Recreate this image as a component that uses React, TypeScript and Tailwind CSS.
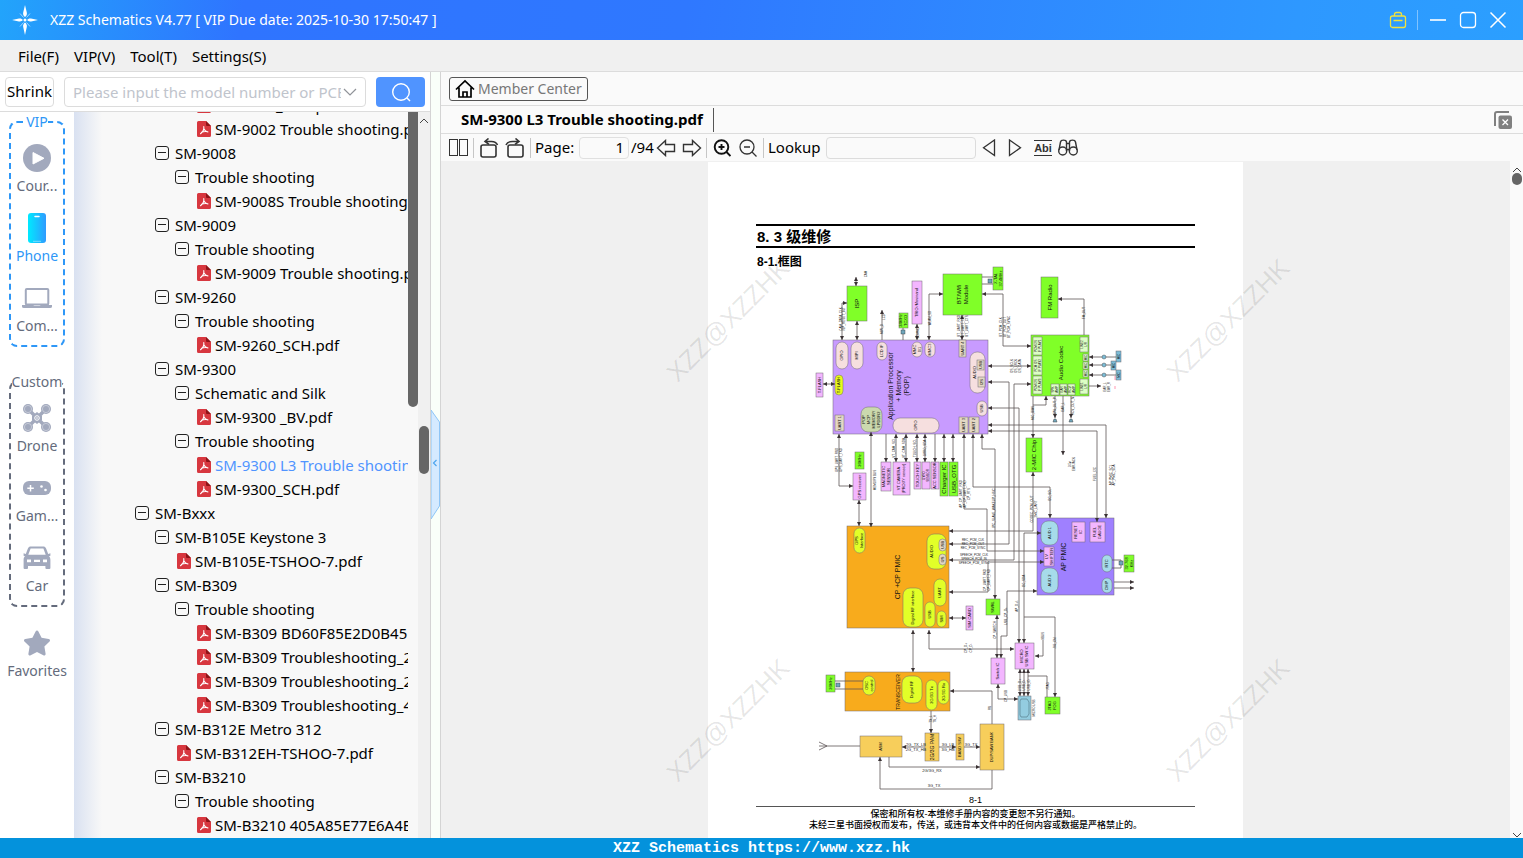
import type { ReactNode } from "react";
import { FaStar } from "react-icons/fa";

type TreeRow = {
  kind: "folder" | "file";
  depth: number;
  label: string;
  active?: boolean;
};

const folder = (depth: number, label: string): TreeRow => ({ kind: "folder", depth, label });
const file = (depth: number, label: string, active = false): TreeRow => ({
  kind: "file",
  depth,
  label,
  active,
});

const tree: TreeRow[] = [
  file(3, "SM-9002_SCH.pdf"),
  file(3, "SM-9002 Trouble shooting.pdf"),
  folder(1, "SM-9008"),
  folder(2, "Trouble shooting"),
  file(3, "SM-9008S Trouble shooting.pdf"),
  folder(1, "SM-9009"),
  folder(2, "Trouble shooting"),
  file(3, "SM-9009 Trouble shooting.pdf"),
  folder(1, "SM-9260"),
  folder(2, "Trouble shooting"),
  file(3, "SM-9260_SCH.pdf"),
  folder(1, "SM-9300"),
  folder(2, "Schematic and Silk"),
  file(3, "SM-9300 _BV.pdf"),
  folder(2, "Trouble shooting"),
  file(3, "SM-9300 L3 Trouble shooting.pdf", true),
  file(3, "SM-9300_SCH.pdf"),
  folder(0, "SM-Bxxx"),
  folder(1, "SM-B105E Keystone 3"),
  file(2, "SM-B105E-TSHOO-7.pdf"),
  folder(1, "SM-B309"),
  folder(2, "Trouble shooting"),
  file(3, "SM-B309 BD60F85E2D0B451"),
  file(3, "SM-B309 Troubleshooting_2"),
  file(3, "SM-B309 Troubleshooting_2"),
  file(3, "SM-B309 Troubleshooting_4"),
  folder(1, "SM-B312E Metro 312"),
  file(2, "SM-B312EH-TSHOO-7.pdf"),
  folder(1, "SM-B3210"),
  folder(2, "Trouble shooting"),
  file(3, "SM-B3210 405A85E77E6A4B"),
];

const indent = ["pl-[61px]", "pl-[81px]", "pl-[101px]", "pl-[121px]"];

function PdfIcon() {
  return (
    <svg viewBox="0 0 14 16" className="h-4 w-3.5">
      <path d="M1.500 0H9l5 5v9.500a1.500 1.500 0 0 1-1.500 1.500h-11A1.500 1.500 0 0 1 0 14.500v-13A1.500 1.500 0 0 1 1.500 0z" fill="#d7373f" />
      <path d="M9 0l5 5h-4a1 1 0 0 1-1-1z" fill="#8e1519" />
      <path d="M6.800 5.500c.4 3-1 5.500-3.300 7.200M7 8c.6 1.500 2 2.700 4 3M4.500 11.300c2-.9 4-1.100 6.300-.6" fill="none" stroke="#fff" strokeWidth="1.100" strokeLinecap="round" />
    </svg>
  );
}

function CollapseIcon() {
  return (
    <svg viewBox="0 0 14 14" className="h-3.5 w-3.5" fill="none" stroke="#222">
      <rect x="0.500" y="0.500" width="13" height="13" rx="2.500" />
      <path d="M3 6.500h8" />
    </svg>
  );
}

/* ---------- category column ---------- */

function CourseIcon() {
  return (
    <svg viewBox="0 0 28 28" className="h-7 w-7">
      <circle cx="14" cy="14" r="14" fill="#a2a9bd" />
      <path d="M10 8.500v11.500l11-5.700z" fill="#fff" stroke="#fff" strokeLinejoin="round" />
    </svg>
  );
}

function PhoneIcon() {
  return (
    <svg viewBox="0 0 18 30" className="h-[30px] w-[18px]">
      <defs>
        <linearGradient id="phone" x1="0" x2="1" y1="0" y2="0">
          <stop offset="0" stopColor="#00eaff" />
          <stop offset="1" stopColor="#2f9bff" />
        </linearGradient>
      </defs>
      <rect width="18" height="30" rx="3" fill="url(#phone)" />
      <path d="M7 3.500h4" stroke="#fff" strokeWidth="1.500" strokeLinecap="round" />
      <path d="M5 28.300h8" stroke="#8fe6ff" strokeWidth="0.800" />
    </svg>
  );
}

function LaptopIcon() {
  return (
    <svg viewBox="0 0 30 20" className="h-5 w-[30px]">
      <rect x="3.800" y="1" width="22.500" height="15.500" rx="1" fill="none" stroke="#a2a9bd" strokeWidth="2" />
      <path d="M0 17h11.500q0 1 1 1h5q1 0 1-1H30v1.500q0 1.500-2 1.500H2q-2 0-2-1.500z" fill="#a2a9bd" />
    </svg>
  );
}

function DroneIcon() {
  return (
    <svg viewBox="0 0 28 28" className="h-7 w-7">
      <path d="M5 5l18 18M23 5L5 23" stroke="#a2a9bd" strokeWidth="3.500" />
      {[5, 23].map((x) =>
        [5, 23].map((y) => (
          <g key={`${x}-${y}`}>
            <circle cx={x} cy={y} r="5" fill="#a2a9bd" />
            <circle cx={x} cy={y} r="3.600" fill="none" stroke="#e6e9ef" strokeWidth="0.500" />
          </g>
        ))
      )}
      <path d="M14 8l5 4v4l-5 4-5-4v-4z" fill="#a2a9bd" />
      <circle cx="14" cy="14" r="2.300" fill="none" stroke="#fff" strokeWidth="1" />
      <circle cx="14" cy="14" r="0.800" fill="#fff" />
    </svg>
  );
}

function GameIcon() {
  return (
    <svg viewBox="0 0 28 14" className="h-3.5 w-7">
      <rect width="28" height="14" rx="6" fill="#a2a9bd" />
      <path d="M7.500 4v6.500M4.300 7.200h6.500" stroke="#fff" strokeWidth="1.500" />
      <circle cx="18.500" cy="5.500" r="1.300" fill="#fff" />
      <circle cx="22.500" cy="9" r="1.300" fill="#fff" />
    </svg>
  );
}

function CarIcon() {
  return (
    <svg viewBox="0 0 28 24" className="h-6 w-7" fill="#a2a9bd">
      <path fillRule="evenodd" d="M8 0.500h12c1.600 0 2.600.6 3.200 2.200l2 5.300 2.200-.7v2.400l-1.400.6c1 1 1.400 2 1.400 3.500V22a1 1 0 0 1-1 1h-3a1 1 0 0 1-1-1v-2H5v2a1 1 0 0 1-1 1H1.600a1 1 0 0 1-1-1v-8.200c0-1.500.4-2.500 1.400-3.500l-1.400-.6V7.300l2.200.7 2-5.300C5.400 1.100 6.400.5 8 .5zM7.600 2.500L5.300 8.800h17.400l-2.300-6.300zM4 13.500v2.700h4v-2.700zM11 13.800v2.200h6v-2.200zM20 13.500v2.700h4v-2.700z" />
    </svg>
  );
}

function Category({ icon, label, active }: { icon: ReactNode; label: string; active?: boolean }) {
  return (
    <button type="button" className="flex w-full flex-col items-center gap-0.5">
      <span className="flex h-8 items-center justify-center">{icon}</span>
      <span className={`h-5 text-sm leading-5 ${active ? "text-[#2e97f7]" : "text-[#646b7c]"}`}>
        {label}
      </span>
    </button>
  );
}

/* ---------- block diagram ---------- */

type Block = [x: number, y: number, x2: number, y2: number, fill: string, label?: string, size?: number, pill?: boolean];

const GREEN = "#80ff28";
const PINK = "#f3b6ff";
const ROSE = "#f6dfdf";
const BEIGE = "#e3d8c4";
const LIME = "#e2ff28";
const SKY = "#a6dbea";
const LEAF = "#dcffc4";
const AMBER = "#f7ce5b";
const ORANGE = "#f8ab1c";

const blocks: Block[] = [
  [847, 286, 867, 321, GREEN, "ISP", 6],
  [912, 281, 922, 324, PINK, "TRIO /Movinand", 4],
  [943, 274, 982, 315, GREEN, "BT/Wifi|Module", 6],
  [899, 313, 908, 328, GREEN, "24MHz|TCXO", 4],
  [993, 267, 1003, 290, GREEN, "X-TAL|37.4MHz", 4],
  [1041, 277, 1058, 318, GREEN, "FM Radio", 6],
  [816, 373, 823, 397, PINK, "T-FLASH", 4],

  [833, 340, 988, 434, "#c89bff"],
  [836, 342, 848, 369, ROSE, "GPIO", 4, true],
  [851, 342, 863, 369, ROSE, "MIPI", 4, true],
  [877, 342, 887, 360, ROSE, "LCD IF", 4, true],
  [912, 342, 922, 357, ROSE, "MMC|0/1", 4, true],
  [925, 342, 935, 357, ROSE, "MMC3", 4, true],
  [959, 340, 966, 357, BEIGE, "UART 4", 4],
  [970, 352, 985, 393, ROSE, "AUDIO", 4, true],
  [977, 360, 984, 370, BEIGE, "USB", 4],
  [978, 377, 985, 387, BEIGE, "I2S", 4],
  [977, 401, 987, 416, ROSE, "USB", 4, true],
  [835, 375, 843, 395, "#e8fa1c", "T-FLASH", 4, true],
  [835, 415, 844, 431, BEIGE, "UART 1", 4],
  [861, 407, 882, 432, "#cbd9ae", "POP|MCP|MEMORY|LPDDR2", 4, true],
  [893, 418, 939, 433, ROSE, "GPIO", 4, true],
  [959, 417, 968, 433, BEIGE, "UART 3", 4],
  [969, 417, 979, 433, BEIGE, "UART 2", 4],

  [1031, 335, 1089, 396, GREEN],
  [1033, 337, 1042, 355, LEAF, "PCM I2S|IF PLAY1", 3],
  [1033, 356, 1042, 375, LEAF, "PCM I2S|IF PLAY2", 3],
  [1033, 376, 1042, 394, LEAF, "PCM I2S|IF PLAY3", 3],
  [1080, 337, 1088, 352, LEAF, "LINE2|L/R", 3],
  [1083, 354, 1088, 361, LEAF, "MIC", 3],
  [1083, 362, 1088, 369, LEAF, "MIC", 3],
  [1083, 370, 1088, 377, LEAF, "MIC", 3],
  [1080, 379, 1088, 394, LEAF, "LINE1|L/R", 3],
  [1051, 384, 1059, 395, LEAF, "SPK|AMP", 3],
  [1060, 384, 1067, 395, LEAF, "EAR|AMP", 3],
  [1068, 384, 1075, 395, LEAF, "RCV|AMP", 3],
  [1116, 351, 1121, 362, "#7cbcd6", "MIC", 3],
  [1111, 361, 1116, 370, "#7cbcd6", "MIC", 3],
  [1116, 370, 1121, 380, "#7cbcd6", "MIC", 3],
  [1026, 438, 1042, 472, GREEN, "2-MIC Chip", 6],

  [855, 452, 864, 469, GREEN, "26MHz", 4],
  [853, 473, 866, 500, PINK, "GPS reciever", 4],
  [881, 462, 891, 491, PINK, "MAGNETIC|SENSOR", 4],
  [893, 462, 910, 495, PINK, "VT CAMERA|(PROXY sensor)", 4],
  [914, 462, 921, 489, PINK, "TOUCH KEY", 4],
  [922, 462, 930, 489, PINK, "GYRO|SENSOR", 3],
  [931, 462, 939, 489, PINK, "ACC SENSOR", 4],
  [940, 462, 948, 496, GREEN, "Charger IC", 6],
  [949, 462, 958, 496, GREEN, "USB_OTG", 6],

  [847, 526, 949, 628, ORANGE],
  [854, 528, 865, 553, LIME, "GPS|Interface", 4, true],
  [927, 534, 946, 569, LIME, "AUDIO", 4, true],
  [939, 539, 946, 551, BEIGE, "USB", 4, true],
  [939, 554, 946, 565, BEIGE, "I2S", 4, true],
  [934, 579, 946, 606, LIME, "UART", 4, true],
  [903, 588, 923, 627, LIME, "Digital RF interface", 4, true],
  [925, 602, 935, 627, LIME, "USB", 4, true],
  [937, 611, 946, 627, LIME, "SIM", 4, true],
  [966, 606, 973, 630, PINK, "SIM CARD", 4],
  [986, 599, 1000, 615, GREEN, "SWRL", 4],

  [1037, 518, 1114, 595, "#9f80ff"],
  [1041, 521, 1058, 545, SKY, "AUD 1", 4, true],
  [1044, 547, 1054, 566, PINK, "LV|SHIFTER", 4],
  [1041, 568, 1058, 593, SKY, "AUD 2", 4, true],
  [1072, 522, 1085, 542, PINK, "RESET|IC", 4],
  [1090, 522, 1105, 542, PINK, "FUEL|GAUGE", 4],
  [1102, 555, 1112, 572, SKY, "RTC", 4, true],
  [1102, 578, 1112, 593, SKY, "CHIP", 4, true],
  [1124, 555, 1134, 572, GREEN, "32.768|KHz", 4],

  [1015, 643, 1034, 669, PINK, "MICRO|USB SW IC", 4],
  [991, 658, 1005, 684, PINK, "Switch IC", 4],
  [1018, 696, 1031, 720, "#93cce0"],
  [1045, 697, 1060, 714, GREEN, "JTAG|FOG", 4],

  [845, 672, 950, 711, ORANGE],
  [863, 676, 875, 695, LIME, "OSC|control", 4, true],
  [826, 675, 835, 692, GREEN, "26MHz", 4],
  [902, 676, 922, 703, LIME, "Digital RF", 4, true],
  [926, 680, 937, 710, LIME, "2G/3G Tx", 4, true],
  [938, 680, 949, 704, LIME, "2G/3G Rx", 4, true],
  [860, 736, 902, 757, AMBER, "ASM", 4],
  [925, 733, 939, 761, AMBER, "2G/3G PAM", 5],
  [956, 734, 964, 760, AMBER, "BAND S/W", 4],
  [980, 724, 1004, 770, AMBER, "DUP/SAW BANK", 4],
];

type Wire = [points: string, arrows: "both" | "end" | "start" | "none"];

const wires: Wire[] = [
  ["856,277 856,286", "both"],
  ["857,321 857,340", "both"],
  ["842,340 842,303 847,303", "both"],
  ["882,340 882,310", "end"],
  ["917,340 917,324", "both"],
  ["929,340 929,294 943,294", "both"],
  ["962,340 962,315", "both"],
  ["823,384 835,384", "both"],
  ["903,328 903,340", "none"],
  ["982,277 993,277", "none"],
  ["982,284 993,284", "none"],
  ["982,294 1003,294 1003,346 1031,346", "both"],
  ["1058,299 1084,299 1084,335", "start"],
  ["988,366 1031,366", "both"],
  ["988,382 1009,382 1009,544 949,544", "both"],
  ["1031,384 1014,384 1014,560 949,560", "both"],
  ["988,408 1019,408 1019,643", "both"],
  ["988,425 1106,425 1106,518", "both"],
  ["988,431 1097,431 1097,522", "both"],
  ["982,434 982,449 995,449 995,599", "both"],
  ["1033,396 1033,438", "end"],
  ["1033,405 1046,405 1046,396", "end"],
  ["1055,396 1055,418", "end"],
  ["1063,396 1063,455", "end"],
  ["1071,396 1071,418", "end"],
  ["1033,472 1033,531 949,531", "both"],
  ["973,434 973,487 1050,487 1050,518", "both"],
  ["964,434 964,509 987,509 987,551 1044,551", "both"],
  ["949,592 988,592 988,562 1044,562", "both"],
  ["1041,533 1024,533 1024,643", "both"],
  ["1024,617 1055,617 1055,697", "end"],
  ["1037,591 1007,591 1007,636 1001,636 1001,658", "both"],
  ["997,615 997,658", "both"],
  ["929,630 929,649 1014,649", "both"],
  ["913,630 913,672", "both"],
  ["1020,669 1020,696", "both"],
  ["1024,669 1024,696", "both"],
  ["1028,669 1028,696", "both"],
  ["1028,676 1047,676 1047,697", "none"],
  ["998,684 998,699 1018,699", "both"],
  ["1043,640 1043,656 1035,656", "end"],
  ["949,618 966,618", "both"],
  ["859,500 859,526", "both"],
  ["839,434 839,486 853,486", "both"],
  ["871,432 871,527", "both"],
  ["886,434 886,462", "end"],
  ["896,434 896,462", "both"],
  ["906,434 906,462", "both"],
  ["917,434 917,462", "both"],
  ["925,434 925,462", "both"],
  ["935,434 935,462", "end"],
  ["944,434 944,462", "both"],
  ["953,434 953,462", "both"],
  ["950,691 992,691 992,724", "start"],
  ["931,711 931,733", "end"],
  ["902,747 925,747", "start"],
  ["939,747 956,747", "end"],
  ["964,747 980,747", "end"],
  ["889,757 889,767 980,767", "end"],
  ["880,757 880,789 992,789 992,770", "start"],
  ["860,746 819,746", "none"],
  ["819,742 827,746 819,750", "none"],
  ["835,681 863,681", "none"],
  ["835,689 863,689", "none"],
  ["1089,357 1116,357", "start"],
  ["1089,365 1111,365", "start"],
  ["1089,375 1116,375", "start"],
  ["1089,386 1101,386", "end"],
  ["1112,560 1121,560 1121,568 1112,568", "none"],
  ["1114,582 1134,582", "end"],
  ["1114,588 1134,588", "end"],
];

// signal names, printed vertically beside their wires
const signals: [x: number, y: number, text: string][] = [
  [841, 319, "CAM_DATA_CLK"],
  [844, 319, "ISP_RESET_INT"],
  [866, 274, "CAM"],
  [882, 329, "MIPI_D"],
  [884, 317, "LCD"],
  [918, 333, "SDMMC"],
  [930, 318, "WLAN_SD"],
  [959, 326, "BT_UART_RXD"],
  [963, 326, "BT_UART_TXD"],
  [967, 326, "BT_UART_CTS"],
  [1001, 327, "BT_PCM_CLK"],
  [1005, 327, "BT_PCM_OUT"],
  [1009, 327, "BT_PCM_SYNC"],
  [1084, 313, "FM_OUT"],
  [1012, 366, "I2S_SCLK"],
  [1016, 366, "I2S_LRCK"],
  [1020, 366, "I2S_DATA"],
  [837, 460, "GPS_UART_RXD"],
  [841, 460, "GPS_UART_TXD"],
  [875, 480, "MEMORY BUS"],
  [894, 448, "VT_CAM_SCL"],
  [904, 448, "VT_CAM_SDA"],
  [915, 448, "TOUCH_SCL"],
  [925, 448, "GYRO_SDA"],
  [961, 494, "AP_CP_UART_RXD"],
  [965, 494, "AP_CP_UART_TXD"],
  [969, 494, "CP_RTS"],
  [994, 508, "IPC_SLAVE_WAKEUP_HSIC"],
  [1033, 413, "MIC_BIAS"],
  [1055, 406, "SPK_OUT_P"],
  [1063, 407, "EAR_L"],
  [1073, 406, "RCV_OUT_N"],
  [1070, 464, "3.5φ"],
  [1074, 464, "EARJACK"],
  [1095, 474, "FUEL_I2C"],
  [1111, 475, "AP_PMIC_SCL"],
  [1114, 475, "AP_PMIC_SDA"],
  [1050, 495, "I2C_SCL"],
  [1032, 509, "CODEC_PCM_OUT"],
  [1036, 509, "2MIC_UART"],
  [985, 580, "CP_UART_RXD"],
  [989, 580, "CP_UART_TXD"],
  [1024, 581, "I2C_SDA"],
  [1017, 606, "AP_D+/-"],
  [1006, 616, "USB_CP_D+"],
  [995, 630, "CP_SWITCH"],
  [1043, 636, "VBUS"],
  [1055, 643, "JIG_ON"],
  [1020, 685, "USB_D+"],
  [1024, 685, "USB_D-"],
  [1029, 685, "USB_ID"],
  [1048, 686, "JTAG"],
  [1034, 708, "MICRO USB"],
  [1006, 696, "CP_USB"],
  [990, 708, "RX"],
  [931, 719, "TX_L"],
  [935, 719, "TX_H"],
  [966, 648, "CP_D+"],
  [971, 648, "CP_D-"],
  [1105, 387, "EAR_L"],
  [1109, 387, "EAR_R"],
];

const captions: [x: number, y: number, text: string, size: number][] = [
  [916, 746, "2G_TX_LB", 4],
  [916, 751, "2G_TX_HB", 4],
  [948, 746, "3G_LB", 4],
  [948, 751, "3G_HB", 4],
  [971, 746, "3G_TX", 4],
  [932, 772, "2G/3G_RX", 4],
  [934, 787, "3G_TX", 4],
  [973, 541, "REC_PCM_CLK", 3],
  [973, 545, "REC_PCM_OUT", 3],
  [973, 549, "REC_PCM_SYNC", 3],
  [974, 556, "SPEECH_PCM_CLK", 3],
  [974, 560, "SPEECH_PCM_IN", 3],
  [974, 564, "SPEECH_PCM_SYNC", 3],
];

function Vertical({ x, y, size, text, fill = "#111" }: { x: number; y: number; size: number; text: string; fill?: string }) {
  const lines = text.split("|");
  return (
    <>
      {lines.map((line, i) => (
        <text
          key={line}
          transform={`translate(${x + (i - (lines.length - 1) / 2) * (size + 1) + size * 0.35} ${y}) rotate(-90)`}
          fontSize={size}
          fill={fill}
          textAnchor="middle"
        >
          {line}
        </text>
      ))}
    </>
  );
}

function BlockDiagram() {
  return (
    <svg
      viewBox="756 266 439 528"
      className="block h-[528px] w-full font-['Liberation_Sans',sans-serif]"
      role="img"
      aria-label="Block diagram"
    >
      <defs>
        <marker id="arrow" viewBox="0 0 4 4" refX="4" refY="2" markerWidth="4" markerHeight="4" markerUnits="userSpaceOnUse" orient="auto-start-reverse">
          <path d="M0 0l4 2-4 2z" fill="#3a3234" />
        </marker>
      </defs>
      {blocks.map(([x, y, x2, y2, fill, label, size = 4, pill], i) => (
        <g key={i}>
          <rect
            x={x}
            y={y}
            width={x2 - x}
            height={y2 - y}
            rx={pill ? Math.min(x2 - x, y2 - y, 14) / 2 : 0}
            fill={fill}
            stroke="#6f6a70"
            strokeWidth="0.500"
          />
          {label && <Vertical x={label === "AUDIO" ? x + 5 : (x + x2) / 2} y={(y + y2) / 2} size={size} text={label} />}
        </g>
      ))}
      <Vertical x={899} y={386} size={7} text="Application Processor|+ Memory|(POP)" />
      <Vertical x={1061} y={363} size={6} text="Audio Codec" />
      <Vertical x={898} y={577} size={7} text="CP +CP PMIC" />
      <Vertical x={1064} y={557} size={7} text="AP PMIC" />
      <Vertical x={898} y={692} size={5} text="TRANSCEIVER" />
      {wires.map(([points, arrows], i) => (
        <polyline
          key={i}
          points={points}
          fill="none"
          stroke="#5d5557"
          strokeWidth="0.800"
          markerStart={arrows === "both" || arrows === "start" ? "url(#arrow)" : undefined}
          markerEnd={arrows === "both" || arrows === "end" ? "url(#arrow)" : undefined}
        />
      ))}
      {signals.map(([x, y, text], i) => (
        <Vertical key={i} x={x} y={y} size={3} text={text} fill="#222" />
      ))}
      {captions.map(([x, y, text, size], i) => (
        <text key={i} x={x} y={y} fontSize={size} fill="#222" textAnchor="middle">
          {text}
        </text>
      ))}
      {[357, 365, 375].map((y) => (
        <circle key={y} cx="1104" cy={y} r="2" fill="#7cbcd6" stroke="#333" strokeWidth="0.400" />
      ))}
      <path d="M1053 422l1-3h2l1 3zM1069 422l1-3h2l1 3z" fill="#6fa5bb" stroke="#444" strokeWidth="0.500" />
      <path d="M1020 701l1-2h6l2 3v12l-2 3h-6l-1-2z" fill="none" stroke="#40606c" strokeWidth="0.500" />
      <path d="M1115 386v3M1115 376v4" stroke="#f36" strokeWidth="0.500" />
      {[[990, 281], [903, 332], [838, 685], [1121, 563]].map(([x, y]) => (
        <rect key={x} x={x - 2} y={y - 2} width="4" height="4" fill="#6fa5bb" stroke="#333" strokeWidth="0.400" />
      ))}
    </svg>
  );
}

/* ---------- document viewer ---------- */

function Watermark({ className }: { className: string }) {
  return (
    <span
      className={`pointer-events-none absolute flex h-0 w-0 items-center justify-center font-['Liberation_Sans',sans-serif] text-[26px] whitespace-nowrap text-black/10 ${className}`}
    >
      <span className="-rotate-45">XZZ@XZZHK</span>
    </span>
  );
}

function DocumentPage() {
  return (
    <article className="relative w-[535px] shrink-0 bg-white px-12 pt-[62px] font-['Liberation_Sans','Noto_Sans_CJK_SC',sans-serif] text-black">
      <h1 className="flex h-6 items-center border-t-2 border-b-2 border-black pt-0.5 pl-px text-[15px] font-bold">
        8. 3 级维修
      </h1>
      <h2 className="mt-1 -mb-1.5 flex h-5 items-center pl-px text-xs font-bold">8-1.框图</h2>
      <BlockDiagram />
      <div className="border-b border-[#555] text-center text-[9px] leading-3">8-1</div>
      <p className="pt-0.5 text-center text-[9px] leading-[11px] font-medium">
        保密和所有权-本维修手册内容的变更恕不另行通知。
        <br />
        未经三星书面授权而发布，传送，或违背本文件中的任何内容或数据是严格禁止的。
      </p>
      <Watermark className="top-[158px] left-[20px]" />
      <Watermark className="top-[158px] left-[520px]" />
      <Watermark className="top-[558px] left-[20px]" />
      <Watermark className="top-[558px] left-[520px]" />
    </article>
  );
}

function ToolButton({ label, children }: { label: string; children: ReactNode }) {
  return (
    <button type="button" aria-label={label} className="flex h-6 shrink-0 items-center justify-center">
      {children}
    </button>
  );
}

function Divider() {
  return <span className="h-5 w-px shrink-0 bg-[#c6c6c6]" />;
}

function Toolbar() {
  return (
    <div className="flex h-[27px] shrink-0 items-center pl-2 text-[15px] text-black">
      <ToolButton label="Two pages">
        <svg viewBox="0 0 20 18" className="h-[18px] w-5" fill="none" stroke="#333">
          <rect x="0.500" y="0.500" width="8" height="16" />
          <rect x="10.500" y="0.500" width="8" height="16" />
        </svg>
      </ToolButton>
      <div className="ml-1 flex items-center gap-1.5">
        <Divider />
        <ToolButton label="Rotate left">
          <svg viewBox="0 0 19 20" className="h-5 w-[19px]" fill="none" stroke="#333" strokeWidth="1.600">
            <rect x="1" y="7" width="15" height="12" rx="2" />
            <path d="M8.500 0.500L5 3.500l4 2.800M5.500 3.500h6c3 0 5 1.200 6 3.500" />
          </svg>
        </ToolButton>
        <ToolButton label="Rotate right">
          <svg viewBox="0 0 19 20" className="h-5 w-[19px]" fill="none" stroke="#333" strokeWidth="1.600">
            <rect x="3" y="7" width="15" height="12" rx="2" />
            <path d="M10.500 0.500L14 3.500l-4 2.800M13.500 3.500h-6C4.500 3.500 2 4.700 1 7" />
          </svg>
        </ToolButton>
        <Divider />
      </div>
      <label htmlFor="page" className="ml-1 w-11">
        Page:
      </label>
      <input
        id="page"
        defaultValue="1"
        className="h-[22px] w-[50px] rounded-sm border border-[#e0e0e0] bg-[#fafafa] pr-1 text-right"
      />
      <span className="ml-0.5 w-[25px]">/94</span>
      <ToolButton label="Previous page">
        <svg viewBox="0 0 20 18" className="h-[18px] w-5" fill="none" stroke="#333" strokeWidth="1.400">
          <path d="M1.500 9l8-7.500v4h9v7h-9v4z" />
        </svg>
      </ToolButton>
      <span className="w-1.5" />
      <ToolButton label="Next page">
        <svg viewBox="0 0 20 18" className="h-[18px] w-5" fill="none" stroke="#333" strokeWidth="1.400">
          <path d="M18.500 9l-8-7.500v4h-9v7h9v4z" />
        </svg>
      </ToolButton>
      <div className="ml-1 flex items-center gap-1.5">
        <Divider />
        <div className="flex items-center gap-2">
          <ToolButton label="Zoom in">
            <svg viewBox="0 0 18 18" className="h-[18px] w-[18px]" fill="none" stroke="#111" strokeWidth="1.900">
              <circle cx="8.500" cy="8" r="6.800" />
              <path d="M13.500 13l4 4M8.500 5v6M5.500 8h6" />
            </svg>
          </ToolButton>
          <ToolButton label="Zoom out">
            <svg viewBox="0 0 18 18" className="h-[18px] w-[18px]" fill="none" stroke="#333" strokeWidth="1.300">
              <circle cx="8" cy="8" r="7" />
              <path d="M13 13l4.500 4.500M5 8h6" />
            </svg>
          </ToolButton>
        </div>
        <Divider />
      </div>
      <label htmlFor="lookup" className="ml-1 w-[58px]">
        Lookup
      </label>
      <input id="lookup" className="h-[22px] w-[150px] rounded-sm border border-[#dcdcdc] bg-[#fafafa] px-1" />
      <div className="ml-1.5 flex items-center gap-3">
        <ToolButton label="Find previous">
          <svg viewBox="0 0 14 18" className="h-[18px] w-3.5" fill="none" stroke="#333" strokeWidth="1.300">
            <path d="M12.500 1v15.500L1.500 8.700z" />
          </svg>
        </ToolButton>
        <ToolButton label="Find next">
          <svg viewBox="0 0 14 18" className="h-[18px] w-3.5" fill="none" stroke="#333" strokeWidth="1.300">
            <path d="M1.500 1v15.500l11-7.800z" />
          </svg>
        </ToolButton>
        <button
          type="button"
          className="h-4 w-[18px] border-y border-[#333] text-center font-['Liberation_Sans',sans-serif] text-[11px] leading-3.5 font-bold text-[#333]"
        >
          Abi
        </button>
      </div>
      <span className="w-1.5" />
      <ToolButton label="Search in document">
        <svg viewBox="0 0 20 17" className="h-[17px] w-5" fill="none" stroke="#333" strokeWidth="1.400">
          <circle cx="4.700" cy="12" r="4" />
          <circle cx="15.300" cy="12" r="4" />
          <path d="M1 11L2.500 3C3 0.500 8 0.500 8.500 3v9M19 11l-1.500-8c-.5-2.500-5.500-2.500-6 0v9M8.500 4.500h3M8.500 10.500h3" />
        </svg>
      </ToolButton>
    </div>
  );
}

function TitleBar() {
  return (
    <header className="flex h-10 shrink-0 items-center bg-[linear-gradient(100deg,#22a4fb_0%,#2f74ff_16%,#2f78ff_45%,#2e98ff_85%,#2b9fff_100%)] pr-4 pl-3 text-sm text-white">
      <svg viewBox="0 0 26 30" className="h-[30px] w-[26px]" fill="#fff">
        <path d="M13 0l1.800 7.500c.5 2-.6 3.500-1.800 4.500-1.200-1-2.300-2.500-1.800-4.500zM13 30l1.800-8c.5-2-.6-3.500-1.800-4.500-1.200 1-2.300 2.500-1.800 4.500zM0 15l7-1.400c2-.3 3 .4 4 1.400-1 1-2 1.700-4 1.400zM26 15l-7-1.400c-2-.3-3 .4-4 1.400 1 1 2 1.700 4 1.400z" />
        <path d="M8 8.500l3.500 4M18 8.500l-3.500 4M8 21.500l3.500-4M18 21.500l-3.500-4" stroke="#bfe2ff" strokeWidth="0.800" />
        <circle cx="13" cy="15" r="1.500" />
      </svg>
      <span className="ml-3">XZZ Schematics V4.77 [ VIP Due date: 2025-10-30 17:50:47 ]</span>
      <div className="ml-auto flex items-center">
        <button type="button" aria-label="Toolbox">
          <svg viewBox="0 0 18 18" className="h-[18px] w-[18px]" fill="none" stroke="#f1e23c" strokeWidth="1.300">
            <rect x="1.500" y="5" width="15" height="11.500" rx="2" />
            <path d="M5.500 5V3.500Q5.500 1.500 7.500 1.500h3q2 0 2 2V5M4.500 9.500h9" />
          </svg>
        </button>
        <span className="mx-2.5 h-5 w-px bg-white/40" />
        <div className="flex items-center gap-3 pl-px">
          <button type="button" aria-label="Minimize">
            <svg viewBox="0 0 18 18" className="h-[18px] w-[18px]" fill="none" stroke="#fff" strokeWidth="1.600">
              <path d="M1 9h16" />
            </svg>
          </button>
          <button type="button" aria-label="Maximize">
            <svg viewBox="0 0 18 18" className="h-[18px] w-[18px]" fill="none" stroke="#fff" strokeWidth="1.300">
              <rect x="1.500" y="1.500" width="15" height="15" rx="3" />
            </svg>
          </button>
          <button type="button" aria-label="Close">
            <svg viewBox="0 0 18 18" className="h-[18px] w-[18px]" fill="none" stroke="#fff" strokeWidth="1.500">
              <path d="M1.500 1.500l15 15M16.500 1.500l-15 15" />
            </svg>
          </button>
        </div>
      </div>
    </header>
  );
}

function SearchRow() {
  return (
    <div className="flex h-10 shrink-0 items-center border-b border-[#dcdcdc] bg-white px-[5px]">
      <button type="button" className="h-[30px] w-[49px] shrink-0 rounded border border-[#dcdcdc] text-[15px]">
        Shrink
      </button>
      <div className="ml-2.5 flex h-[30px] min-w-0 flex-1 items-center rounded border border-[#dcdcdc] px-2">
        <input
          aria-label="Search"
          placeholder="Please input the model number or PCB"
          className="h-7 min-w-0 flex-1 text-[15px] outline-none placeholder:text-[#c0c4cc]"
        />
        <button type="button" aria-label="Show suggestions">
          <svg viewBox="0 0 14 8" className="ml-0.5 h-2 w-3.5" fill="none" stroke="#909399" strokeWidth="1.200">
            <path d="M1 1l6 6 6-6" />
          </svg>
        </button>
      </div>
      <button
        type="button"
        aria-label="Find"
        className="ml-2.5 flex h-[30px] w-[49px] shrink-0 items-center justify-center rounded-sm bg-[#5094ff]"
      >
        <svg viewBox="0 0 20 20" className="h-5 w-5" fill="none" stroke="#fff" strokeWidth="1.400">
          <circle cx="10" cy="10" r="8.300" />
          <path d="M16 16l3 3" />
        </svg>
      </button>
    </div>
  );
}

function Categories() {
  return (
    <nav className="w-[74px] shrink-0 overflow-hidden bg-white px-[9px]">
      <fieldset className="min-w-0 rounded-lg border-2 border-dashed border-[#2e97f7] pt-2.5 pb-[9px]">
        <legend className="mx-auto h-5 text-sm leading-5 text-[#2e97f7]">VIP</legend>
        <div className="flex flex-col gap-4">
          <Category icon={<CourseIcon />} label="Cour..." />
          <Category icon={<PhoneIcon />} label="Phone" active />
          <Category icon={<LaptopIcon />} label="Com..." />
        </div>
      </fieldset>
      <fieldset className="mt-[25px] min-w-0 rounded-lg border-2 border-dashed border-[#646b7c] pt-2.5 pb-[9px]">
        <legend className="mx-auto h-5 text-sm leading-5 text-[#646b7c]">Custom</legend>
        <div className="flex flex-col gap-4">
          <Category icon={<DroneIcon />} label="Drone" />
          <Category icon={<GameIcon />} label="Gam..." />
          <Category icon={<CarIcon />} label="Car" />
        </div>
      </fieldset>
      <div className="mt-5">
        <Category icon={<FaStar className="h-7 w-7 text-[#a2a9bd]" />} label="Favorites" />
      </div>
    </nav>
  );
}

function ModelTree() {
  return (
    <div className="flex min-w-0 flex-1 overflow-hidden bg-[#f8f8f8] bg-[linear-gradient(to_right,#d9e1f1,#f8f8f8_28px)]">
      <ul className="-mt-[19px] min-w-0 flex-1 overflow-hidden">
        {tree.map((row, i) => (
          <li key={i} className={`flex h-6 items-center ${indent[row.depth]}`}>
            <span className={`flex w-5 shrink-0 ${row.kind === "file" ? "pl-0.5" : ""}`}>
              {row.kind === "file" ? <PdfIcon /> : <CollapseIcon />}
            </span>
            <a href="#" className={`text-[15px] whitespace-nowrap ${row.active ? "text-[#5094ff]" : "text-black"}`}>
              {row.label}
            </a>
          </li>
        ))}
      </ul>
      <div className="h-[295px] w-2.5 shrink-0 rounded-b-full bg-[#666]" />
      <div className="flex w-3 shrink-0 flex-col items-center justify-between bg-[#f0f0f0]">
        <svg viewBox="0 0 10 6" className="mt-1.5 h-1.5 w-2.5" fill="none" stroke="#444">
          <path d="M1 5l4-4 4 4" />
        </svg>
        <span className="-mt-14 h-12 w-2.5 rounded-full bg-[#666]" />
        <span className="h-1.5" />
      </div>
    </div>
  );
}

export default function App() {
  return (
    <div className="flex h-screen flex-col overflow-hidden bg-[#fafafa] font-['Noto_Sans','Noto_Sans_CJK_SC',sans-serif] text-black">
      <TitleBar />
      <nav className="flex h-8 shrink-0 items-center gap-[15px] border-b border-[#dcdcdc] bg-[#f0f0f0] pt-0.5 pl-[18px] text-[15px]">
        <button type="button">File(F)</button>
        <button type="button">VIP(V)</button>
        <button type="button">Tool(T)</button>
        <button type="button">Settings(S)</button>
      </nav>

      <div className="flex min-h-0 flex-1">
        <aside className="flex w-[430px] shrink-0 flex-col">
          <SearchRow />
          <div className="flex min-h-0 flex-1">
            <Categories />
            <ModelTree />
          </div>
        </aside>

        <div className="flex w-[11px] shrink-0 flex-col items-center justify-center border-x border-[#d4d4d4] bg-[#f9fff9]">
          <button type="button" aria-label="Hide side panel" className="mt-[19px] h-[110px] w-[9px]">
            <svg viewBox="0 0 9 110" className="h-[110px] w-[9px]" fill="none">
              <path d="M0 0l8.500 12v84L0 109z" fill="#d5eaff" stroke="#8ec5f6" />
              <path d="M5.500 50L2.500 53l3 3" stroke="#4ea5ee" strokeWidth="1.200" />
            </svg>
          </button>
        </div>

        <main className="flex min-w-0 flex-1 flex-col">
          <div className="flex h-[34px] shrink-0 items-center border-b border-[#dcdcdc] pl-2">
            <button
              type="button"
              className="flex h-6 items-center gap-[3px] rounded-[3px] border border-[#555] px-[5px] text-sm text-[#777]"
            >
              <svg viewBox="0 0 20 20" className="h-5 w-5" fill="none" stroke="#000" strokeWidth="1.700">
                <path d="M1 10.500L10 2l9 8.500M4 8.500V18h12V8.500M8 18v-5h4v5" />
              </svg>
              Member Center
            </button>
          </div>
          <div className="flex h-7 shrink-0 items-center border-b border-[#dcdcdc] pr-[11px] pl-5">
            <button type="button" className="h-6 border-r border-[#555] pr-2.5 text-[15px] font-bold">
              SM-9300 L3 Trouble shooting.pdf
            </button>
            <button type="button" aria-label="Close all tabs" className="ml-auto">
              <svg viewBox="0 0 18 18" className="h-[18px] w-[18px]" fill="none">
                <path d="M1 15V3q0-2 2-2h12" stroke="#808080" strokeWidth="2" />
                <rect x="4.500" y="4.500" width="13.500" height="13.500" rx="2" fill="#808080" />
                <path d="M8.500 8.500l5.500 5.500M14 8.500L8.500 14" stroke="#fff" strokeWidth="1.300" />
              </svg>
            </button>
          </div>
          <Toolbar />
          <div className="flex min-h-0 flex-1">
            <div className="flex min-w-0 flex-1 justify-center overflow-hidden bg-[#f0f0f0] pt-px">
              <DocumentPage />
            </div>
            <div className="flex w-[13px] shrink-0 flex-col items-center pt-1.5">
              <svg viewBox="0 0 10 6" className="h-1.5 w-2.5" fill="none" stroke="#444">
                <path d="M1 5l4-4 4 4" />
              </svg>
              <span className="h-3 w-2.5 rounded-full bg-[#666]" />
              <svg viewBox="0 0 10 6" className="mt-auto h-1.5 w-2.5" fill="none" stroke="#444">
                <path d="M1 1l4 4 4-4" />
              </svg>
            </div>
          </div>
        </main>
      </div>

      <footer className="flex h-5 shrink-0 items-center justify-center bg-[#0492dc] pt-0.5 font-['Liberation_Mono',monospace] text-[15px] font-bold text-white">
        XZZ Schematics https://www.xzz.hk
      </footer>
    </div>
  );
}
